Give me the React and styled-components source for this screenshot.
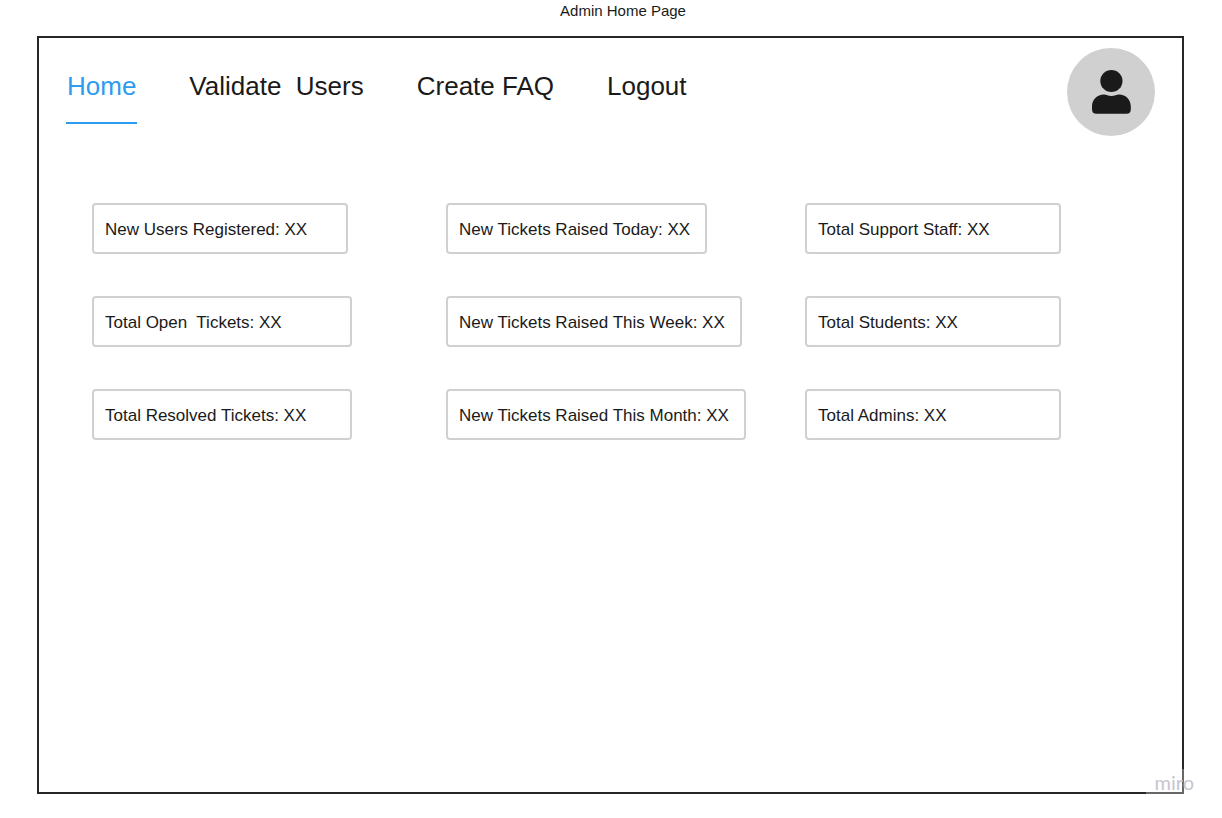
import React from "react";
import styled, { createGlobalStyle } from "styled-components";

const GlobalStyle = createGlobalStyle`
  *, *::before, *::after { box-sizing: border-box; }
  body {
    margin: 0;
    background: #fff;
    color: #1a1a1a;
    font-family: "Liberation Sans", Arial, sans-serif;
  }
`;

const Page = styled.div`
  display: flex;
  flex-direction: column;
  min-height: 100vh;
  padding: 0 38px 24px 37px;
`;

const Title = styled.h1`
  margin: 0;
  padding: 2px 0 16px 25px;
  font-size: 15px;
  line-height: 18px;
  font-weight: 400;
  text-align: center;
`;

const Frame = styled.div`
  position: relative;
  flex: 1;
  border: 2px solid #262626;
`;

const Header = styled.header`
  display: flex;
  justify-content: space-between;
  align-items: flex-start;
  padding: 10px 27px 0;
`;

const Nav = styled.nav`
  display: flex;
  gap: 51px;
  padding-top: 23px;
`;

const NavLink = styled.a`
  padding: 0 1px 21px;
  border-bottom: 2px solid ${(p) => (p.$active ? "#2d9bf0" : "transparent")};
  color: ${(p) => (p.$active ? "#2d9bf0" : "#1a1a1a")};
  font-size: 26px;
  line-height: 30px;
  text-decoration: none;
  white-space: pre;
`;

const Avatar = styled.button`
  width: 88px;
  height: 88px;
  padding: 0;
  border: 0;
  border-radius: 50%;
  background: #d0d0d0;
  cursor: pointer;

  svg { display: block; }
`;

const Stats = styled.main`
  display: grid;
  grid-template-columns: 354fr 359fr 377fr;
  padding: 67px 0 42px 53px;
`;

const Column = styled.div`
  display: flex;
  flex-direction: column;
  align-items: flex-start;
  gap: 42px;
`;

const Card = styled.div`
  min-width: ${(p) => (p.$wide ? 260 : 256)}px;
  padding: 15px 15px 13px 11px;
  border: 2px solid #d0d0d0;
  border-radius: 4px;
  font-size: 17px;
  line-height: 19px;
  white-space: pre;
`;

const Watermark = styled.span`
  position: absolute;
  right: -12px;
  bottom: -3px;
  padding: 0 0 0 9px;
  background: rgba(255, 255, 255, 0.3);
  color: #c6c5d2;
  font-family: Lato, sans-serif;
  font-size: 20px;
  line-height: 26px;
`;

const links = ["Home", "Validate  Users", "Create FAQ", "Logout"];

const columns = [
  [
    { label: "New Users Registered: XX" },
    { label: "Total Open  Tickets: XX", wide: true },
    { label: "Total Resolved Tickets: XX", wide: true },
  ],
  [
    { label: "New Tickets Raised Today: XX" },
    { label: "New Tickets Raised This Week: XX" },
    { label: "New Tickets Raised This Month: XX" },
  ],
  [
    { label: "Total Support Staff: XX" },
    { label: "Total Students: XX" },
    { label: "Total Admins: XX" },
  ],
];

export default function App() {
  return (
    <>
      <GlobalStyle />
      <Page>
        <Title>Admin Home Page</Title>
        <Frame>
          <Header>
            <Nav>
              {links.map((label, i) => (
                <NavLink key={label} href="#" $active={i === 0}>{label}</NavLink>
              ))}
            </Nav>
            <Avatar type="button" aria-label="Profile">
              <svg width="88" height="88" viewBox="0 0 88 88" fill="#1a1a1a" aria-hidden="true">
                <circle cx="44.4" cy="33" r="11.1" />
                <path d="M25 61V58.5C25 51.5 30 46.4 37 46.4C39.5 46.4 41 48 44.4 48C47.8 48 49.5 46.4 52 46.4C59 46.4 63.8 51.5 63.8 58.5V61.5C63.8 64.3 62.3 65.8 59.5 65.8H29.5C26.5 65.8 25 64.3 25 61Z" />
              </svg>
            </Avatar>
          </Header>
          <Stats>
            {columns.map((cards, i) => (
              <Column key={i}>
                {cards.map((card) => (
                  <Card key={card.label} $wide={card.wide}>{card.label}</Card>
                ))}
              </Column>
            ))}
          </Stats>
          <Watermark>miro</Watermark>
        </Frame>
      </Page>
    </>
  );
}
